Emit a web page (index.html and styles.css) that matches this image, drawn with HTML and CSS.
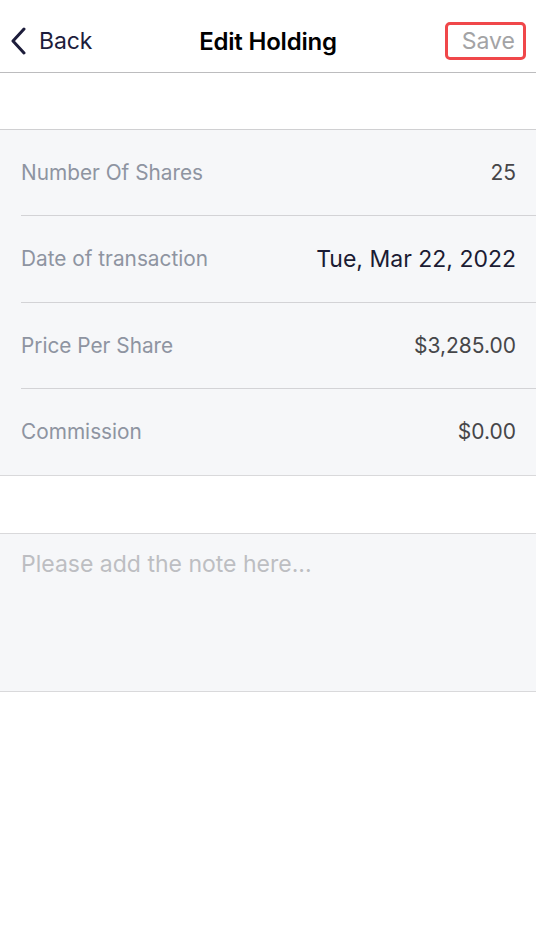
FILE: index.html
```html
<!DOCTYPE html>
<html>
<head>
<meta charset="utf-8">
<link rel="stylesheet" href="styles.css">
</head>
<body>
<div class="screen">
  <header class="nav">
    <div class="back">
      <svg class="chev" width="18" height="28" viewBox="0 0 18 28"><path d="M14 2 L3 14 L14 26" fill="none" stroke="#1d1d3b" stroke-width="3" stroke-linecap="round" stroke-linejoin="round"/></svg>
      <span class="back-text">Back</span>
    </div>
    <div class="title">Edit Holding</div>
    <div class="save">Save</div>
  </header>
  <div class="spacer"></div>
  <section class="group">
    <div class="row"><span class="label">Number Of Shares</span><span class="value">25</span></div>
    <div class="row"><span class="label">Date of transaction</span><span class="value date">Tue, Mar 22, 2022</span></div>
    <div class="row"><span class="label">Price Per Share</span><span class="value">$3,285.00</span></div>
    <div class="row last"><span class="label">Commission</span><span class="value">$0.00</span></div>
  </section>
  <div class="spacer tall"></div>
  <section class="notes">
    <div class="placeholder">Please add the note here...</div>
  </section>
</div>
</body>
</html>
```
FILE: styles.css
```css
* { box-sizing: border-box; }
html, body { margin: 0; padding: 0; background: #fff; }
body { font-family: Inter, "Noto Sans", sans-serif; }
.screen { width: 536px; }
.nav {
  height: 73px;
  border-bottom: 1px solid #bcbcbe;
  display: grid;
  grid-template-columns: 1fr auto 1fr;
  align-items: center;
  padding: 10px 10px 0 10px;
}
.back { display: flex; align-items: center; gap: 11px; color: #1d1d3b; font-size: 23px; }
.chev { display: block; margin-top: -1px; }
.back-text { letter-spacing: -0.1px; }
.title { font-size: 24px; font-weight: 600; color: #000; letter-spacing: -0.2px; }
.save {
  justify-self: end;
  width: 81px; height: 38px;
  border: 3px solid #f0474a;
  border-radius: 5px;
  color: #a3a3a5;
  font-size: 23px;
  display: flex; align-items: center; justify-content: flex-end;
  padding-right: 8px;
}
.spacer { height: 56px; }
.spacer.tall { height: 57px; }
.group {
  background: #f6f7f9;
  border-top: 1px solid #d0d0d2;
  border-bottom: 1px solid #d9d9db;
  padding-left: 21px;
}
.row {
  height: 86.25px;
  display: flex;
  align-items: center;
  justify-content: space-between;
  padding-right: 20px;
  border-bottom: 1px solid #d3d3d6;
}
.row.last { border-bottom: none; }
.label { font-size: 20.8px; color: #8e94a1; }
.value { font-size: 21px; color: #464649; }
.value.date { font-size: 23px; color: #1b1b33; }
.notes {
  background: #f6f7f9;
  border-top: 1px solid #d9d9db;
  border-bottom: 1px solid #d9d9db;
  height: 159px;
  padding: 16px 21px;
}
.placeholder { font-size: 23px; color: #bdbec2; }
```
